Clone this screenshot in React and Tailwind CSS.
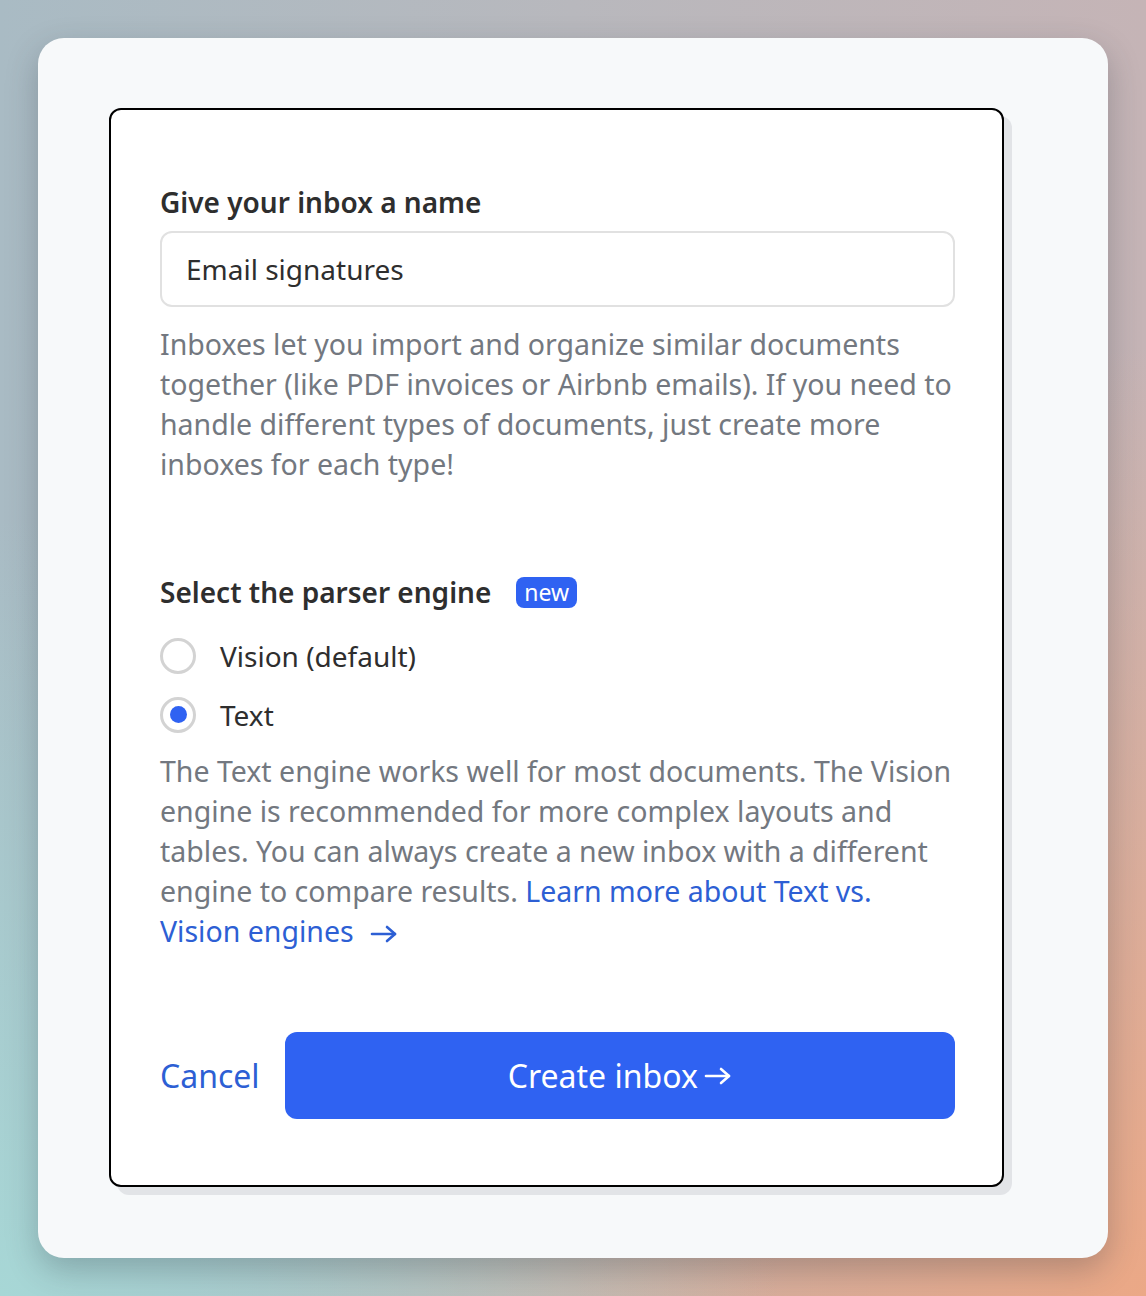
import React, { useState } from "react";

const engines = [
  { id: "vision", label: "Vision (default)" },
  { id: "text", label: "Text" },
];

const Arrow = ({ className }) => (
  <svg
    viewBox="0 0 28 20"
    fill="none"
    stroke="currentColor"
    strokeWidth="2.6"
    strokeLinecap="round"
    strokeLinejoin="round"
    className={className}
  >
    <path d="M2 10h23" />
    <path d="M17 3l8 7-8 7" />
  </svg>
);

const RadioRow = ({ label, checked, onSelect }) => (
  <div
    className="flex items-center gap-[24px] h-[59px] cursor-pointer"
    onClick={onSelect}
  >
    <span className="w-[36px] h-[36px] rounded-full border-[3px] border-[#d3d3d3] bg-white flex items-center justify-center">
      {checked && <span className="w-[17px] h-[17px] rounded-full bg-[#2f62f2]" />}
    </span>
    <span className="text-[28px] text-[#2e2e2e]">{label}</span>
  </div>
);

const App = () => {
  const [name, setName] = useState("Email signatures");
  const [engine, setEngine] = useState("text");

  return (
    <div className="min-h-[1296px] w-full pt-[38px] px-[38px] pb-[38px] font-['Noto_Sans',sans-serif] bg-[radial-gradient(circle_at_0%_100%,#a7d7d6_0%,rgba(167,215,214,0)_45%),radial-gradient(circle_at_100%_100%,#eba886_0%,rgba(235,168,134,0)_55%),linear-gradient(90deg,#a9bbc4_0%,#b8b8bd_50%,#c5b4b6_100%)]">
      <div className="w-[1070px] h-[1220px] rounded-[26px] bg-[#f7f9fa] shadow-[0_12px_32px_rgba(40,50,60,0.28)] pt-[70px] pl-[71px]">
        {/* inner card */}
        <div className="w-[895px] rounded-[12px] border-2 border-black bg-white shadow-[8px_8px_0_#e2e4e7] pl-[49px] pr-[47px] pt-[74px] pb-[66px]">
          <h2 className="text-[28px] leading-[36px] font-semibold text-[#2e2e2e] mb-[11px]">
            Give your inbox a name
          </h2>
          <input
            value={name}
            onChange={(e) => setName(e.target.value)}
            className="w-full h-[76px] rounded-[12px] border-2 border-[#e1e1e1] px-[24px] text-[28px] text-[#2e2e2e] outline-none"
          />
          <p className="mt-[17px] text-[28.5px] leading-[40px] text-[#737880]">
            Inboxes let you import and organize similar documents together (like
            PDF invoices or Airbnb emails). If you need to handle different types
            of documents, just create more inboxes for each type!
          </p>

          <div className="mt-[90px] flex items-center gap-[25px] h-[36px]">
            <h2 className="text-[28px] leading-[36px] font-semibold text-[#2e2e2e]">
              Select the parser engine
            </h2>
            <span className="h-[31px] px-[8px] rounded-[8px] bg-[#2f62f2] text-white text-[23px] leading-[30px]">
              new
            </span>
          </div>

          <div className="mt-[16px]">
            {engines.map((e) => (
              <RadioRow
                key={e.id}
                label={e.label}
                checked={engine === e.id}
                onSelect={() => setEngine(e.id)}
              />
            ))}
          </div>

          <p className="mt-[7px] pr-[2px] text-[28.5px] leading-[40px] text-[#737880]">
            The Text engine works well for most documents. The Vision engine is
            recommended for more complex layouts and tables. You can always create
            a new inbox with a different engine to compare results.{" "}
            <a href="#" className="text-[#2d5fd4]">
              Learn more about Text vs. Vision engines
              <Arrow className="inline-block w-[28px] h-[20px] ml-[16px] align-[-2px]" />
            </a>
          </p>

          <div className="mt-[81px] flex items-center gap-[25px]">
            <button className="text-[32px] text-[#2d5fd4]">Cancel</button>
            <button className="flex-1 h-[87px] rounded-[12px] bg-[#2f62f2] text-white text-[32px] flex items-center justify-center gap-[6px]">
              Create inbox
              <Arrow className="w-[28px] h-[20px]" />
            </button>
          </div>
        </div>
      </div>
    </div>
  );
};

export default App;
